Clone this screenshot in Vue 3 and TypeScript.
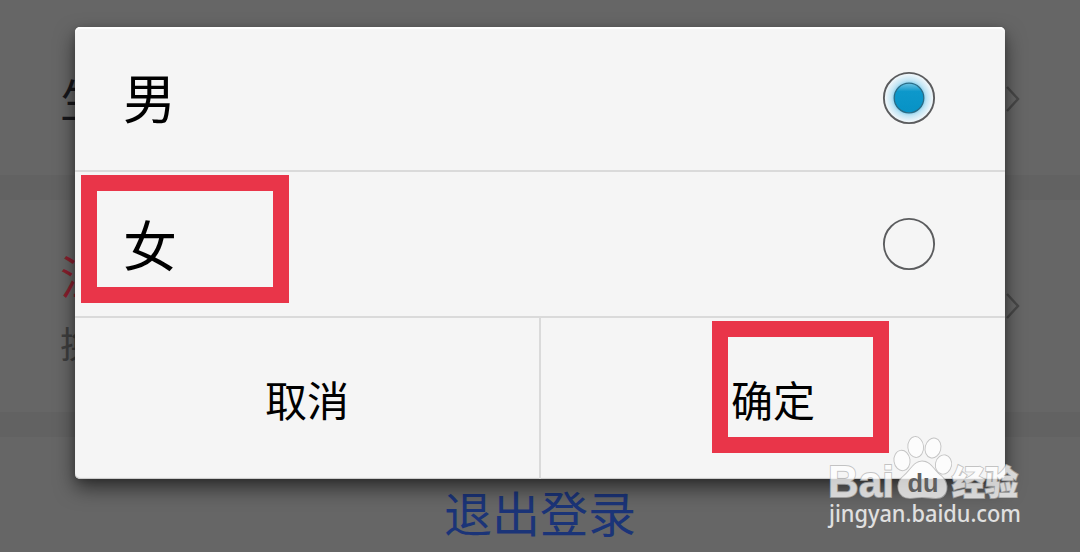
<script setup lang="ts">
import { ref } from 'vue'

interface Choice {
  id: string
  label: string
}

const choices: Choice[] = [
  { id: 'male', label: '男' },
  { id: 'female', label: '女' },
]
const selected = ref('male')
</script>

<template>
  <div class="screen">
    <div class="page">
      <section class="row birthday">
        <span class="row-title">生</span>
        <svg class="chevron" width="14" height="28" viewBox="0 0 14 28">
          <path d="M1 2 L12 14 L1 26" />
        </svg>
      </section>
      <div class="band"></div>
      <section class="row account">
        <div class="stack">
          <span class="row-title danger">注</span>
          <span class="row-note">换</span>
        </div>
        <svg class="chevron" width="14" height="28" viewBox="0 0 14 28">
          <path d="M1 2 L12 14 L1 26" />
        </svg>
      </section>
      <div class="band"></div>
      <div class="logout">退出登录</div>
    </div>

    <div class="dialog">
      <div
        v-for="c in choices"
        :key="c.id"
        class="choice"
        :class="c.id"
        @click="selected = c.id"
      >
        <span class="label">{{ c.label }}</span>
        <svg class="radio" width="54" height="54" viewBox="0 0 54 54">
          <defs>
            <radialGradient id="halo">
              <stop offset="0.56" stop-color="#83cdeb" />
              <stop offset="0.72" stop-color="#c3e6f5" />
              <stop offset="0.92" stop-color="#eaf4f9" />
              <stop offset="1" stop-color="#f3f6f8" />
            </radialGradient>
            <linearGradient id="knob" x1="0" y1="0" x2="0" y2="1">
              <stop offset="0" stop-color="#6cc2e2" />
              <stop offset="0.28" stop-color="#0d98cb" />
              <stop offset="1" stop-color="#0792c5" />
            </linearGradient>
          </defs>
          <template v-if="selected === c.id">
            <circle cx="27" cy="27" r="25" fill="url(#halo)" />
            <circle cx="27" cy="27" r="14.8" fill="url(#knob)" stroke="#2a6c86" stroke-width="1.3" />
          </template>
          <circle cx="27" cy="27" r="25.1" fill="none" stroke="#5b5c5e" stroke-width="1.9" />
        </svg>
      </div>
      <div class="actions">
        <button class="action">取消</button>
        <button class="action confirm">确定</button>
      </div>
    </div>

    <div class="mark mark-choice"></div>
    <div class="mark mark-confirm"></div>

    <svg class="watermark" width="220" height="110" viewBox="0 0 220 110">
      <g class="ink">
        <text class="brand" x="8" y="66.5" textLength="66" lengthAdjust="spacingAndGlyphs">Bai</text>
        <ellipse cx="82" cy="30.5" rx="7.6" ry="9.8" transform="rotate(-8 82 30.5)" />
        <ellipse cx="95.7" cy="17" rx="7.4" ry="10" transform="rotate(-5 95.7 17)" />
        <ellipse cx="113" cy="18" rx="7.4" ry="9.6" transform="rotate(14 113 18)" />
        <ellipse cx="123.5" cy="34.5" rx="7.6" ry="9.2" transform="rotate(12 123.5 34.5)" />
        <path
          d="M102 31.5 C94 31.5 91 40 84 46 C74 54 78 68 90 68 C95 68 98 67 102 67 C107 67 111 68 116 68 C128 68 130 54 121 46 C113 40 111 31.5 102 31.5Z"
        />
        <text class="cn" x="132" y="65" textLength="66" lengthAdjust="spacingAndGlyphs">经验</text>
      </g>
      <text class="du" x="87.5" y="62" textLength="31" lengthAdjust="spacingAndGlyphs">du</text>
      <text class="url" x="9" y="92" textLength="192" lengthAdjust="spacingAndGlyphs">jingyan.baidu.com</text>
    </svg>
  </div>
</template>

<style>
body {
  margin: 0;
}
</style>

<style scoped>
.screen {
  position: relative;
  width: 1080px;
  height: 552px;
  overflow: hidden;
  background: #666;
  font-family: 'Liberation Sans', 'Noto Sans CJK SC', sans-serif;
}
.page {
  display: flex;
  flex-direction: column;
  height: 552px;
}
.row {
  box-sizing: border-box;
  display: flex;
  justify-content: space-between;
  padding: 0 60px;
}
.birthday {
  height: 175px;
  align-items: center;
  padding-top: 22px;
}
.birthday .row-title {
  padding-top: 4px;
}
.account {
  height: 212px;
  align-items: center;
}
.band {
  height: 25px;
  background: #626262;
}
.stack {
  display: flex;
  flex-direction: column;
  gap: 18px;
  padding-top: 6px;
}
.row-title {
  font-size: 46px;
  line-height: 56px;
  color: #17171b;
}
.danger {
  color: #8a1f2e;
}
.row-note {
  font-size: 36px;
  line-height: 44px;
  color: #3e3e3e;
}
.chevron {
  fill: none;
  stroke: #484848;
  stroke-width: 2.4;
}
.logout {
  flex: 1;
  padding-top: 44px;
  text-align: center;
  font-size: 48px;
  line-height: 70px;
  color: #1b3478;
}
.dialog {
  position: absolute;
  left: 75px;
  top: 27px;
  width: 930px;
  height: 452px;
  display: flex;
  flex-direction: column;
  background: #f5f5f5;
  border-radius: 5px;
  box-shadow:
    0 9px 20px rgba(0, 0, 0, 0.55),
    0 2px 6px rgba(0, 0, 0, 0.15),
    inset 0 2px 1px #fff,
    inset 0 -1px 1px #c8c8c8;
}
.choice {
  box-sizing: border-box;
  display: flex;
  align-items: center;
  justify-content: space-between;
  height: 145px;
  padding: 0 69px 0 48px;
  border-bottom: 2px solid #dadada;
}
.female {
  height: 146px;
}
.male .radio {
  margin-bottom: 1px;
}
.label {
  padding-top: 5px;
  font-size: 54px;
  line-height: 80px;
  color: #000;
}
.male .label {
  font-size: 53px;
}
.female .label {
  padding-top: 7px;
}
.actions {
  flex: 1;
  display: flex;
}
.action {
  flex: 1;
  padding: 0;
  border: 0;
  background: none;
  font-family: inherit;
  font-size: 42px;
  color: #000;
}
.confirm {
  border-left: 2px solid #dadada;
}
.mark {
  position: absolute;
  box-sizing: border-box;
  border: 16px solid #e93549;
}
.mark-choice {
  left: 81px;
  top: 175px;
  width: 208px;
  height: 128px;
}
.mark-confirm {
  left: 712px;
  top: 321px;
  width: 177px;
  height: 132px;
}
.watermark {
  position: absolute;
  left: 820px;
  top: 430px;
}
.ink {
  fill: #fff;
  stroke: #b4b4b4;
  stroke-width: 1.8;
  paint-order: stroke;
  opacity: 0.76;
}
.brand {
  font: bold 45px 'Liberation Sans', sans-serif;
}
.cn {
  font: 900 34px 'Noto Sans CJK SC', sans-serif;
}
.du {
  font: bold 26px 'Liberation Sans', sans-serif;
  fill: #606060;
}
.url {
  font: 500 23px 'Noto Sans', sans-serif;
  fill: #e0e0e0;
}
</style>
